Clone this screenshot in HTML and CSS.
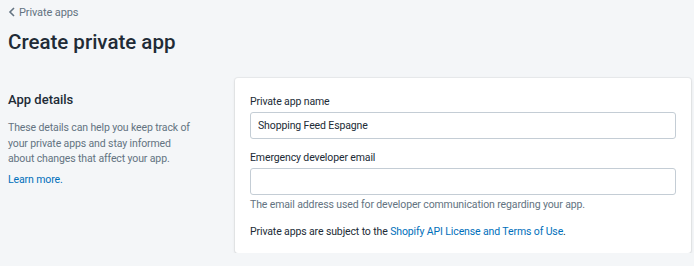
FILE: index.html
```html
<!DOCTYPE html>
<html lang="en">
<head>
    <meta charset="UTF-8">
    <title>Create private app</title>
    <link rel="stylesheet" href="styles.css">
</head>
<body>
    <div class="page">
        <a class="breadcrumb" href="#">
            <svg width="8" height="10" viewBox="0 0 8 10"><path d="M6 1L2 5l4 4" fill="none" stroke="#637381" stroke-width="1.6"/></svg>
            <span>Private apps</span>
        </a>
        <h1 class="title">Create private app</h1>

        <div class="layout">
            <div class="annotation">
                <h2>App details</h2>
                <p>These details can help you keep track of your private apps and stay informed about changes that affect your app.</p>
                <a class="more" href="#">Learn more.</a>
            </div>

            <div class="card">
                <label class="field">
                    <span class="label">Private app name</span>
                    <input type="text" value="Shopping Feed Espagne">
                </label>
                <label class="field">
                    <span class="label">Emergency developer email</span>
                    <input type="text" value="">
                    <span class="help">The email address used for developer communication regarding your app.</span>
                </label>
                <p class="terms">Private apps are subject to the <a href="#">Shopify API License and Terms of Use</a>.</p>
            </div>
        </div>
    </div>
</body>
</html>
```

FILE: styles.css
```css
body {
    margin: 0;
    background: #f4f6f8;
    color: #212b36;
    font-family: Roboto, 'Open Sans', sans-serif;
    font-size: 10.5px;
    letter-spacing: -0.12px;
}

a {
    color: #006fbb;
    text-decoration: none;
}

.page {
    padding: 5px 3px 0 8px;
}

.breadcrumb {
    display: flex;
    align-items: center;
    gap: 3px;
    color: #637381;
    font-size: 11px;
    height: 14px;
}

.title {
    margin: 9px 0 0;
    font-size: 20.5px;
    font-weight: 500;
    line-height: 28px;
    letter-spacing: 0;
}

.layout {
    display: flex;
    margin-top: 22px;
    gap: 44px;
}

.annotation {
    width: 183px;
    padding-top: 13px;
}

.annotation h2 {
    margin: 0;
    font-size: 13px;
    font-weight: 500;
    line-height: 18px;
    letter-spacing: 0;
}

.annotation p {
    margin: 11px 0 5px;
    color: #637381;
    line-height: 15.5px;
}

.more {
    display: block;
    line-height: 16px;
}

.card {
    flex: 1;
    background: #fff;
    border-radius: 3px;
    box-shadow: 0 0 0 1px rgba(63, 63, 68, 0.05), 0 1px 3px rgba(63, 63, 68, 0.15);
    padding: 16px 15px 13px;
}

.field {
    display: block;
    margin-bottom: 11px;
}

.label {
    display: block;
    line-height: 16px;
    margin-bottom: 2px;
}

.field input {
    display: block;
    box-sizing: border-box;
    width: 100%;
    height: 27px;
    margin: 0;
    padding: 0 7px;
    border: 1px solid #c4cdd5;
    border-radius: 3px;
    font-family: inherit;
    font-size: 10.5px;
    letter-spacing: -0.12px;
    color: #212b36;
}

.help {
    display: block;
    margin: 2px 0 4px;
    color: #637381;
    line-height: 16px;
}

.terms {
    margin: 0;
    line-height: 16px;
}
```
